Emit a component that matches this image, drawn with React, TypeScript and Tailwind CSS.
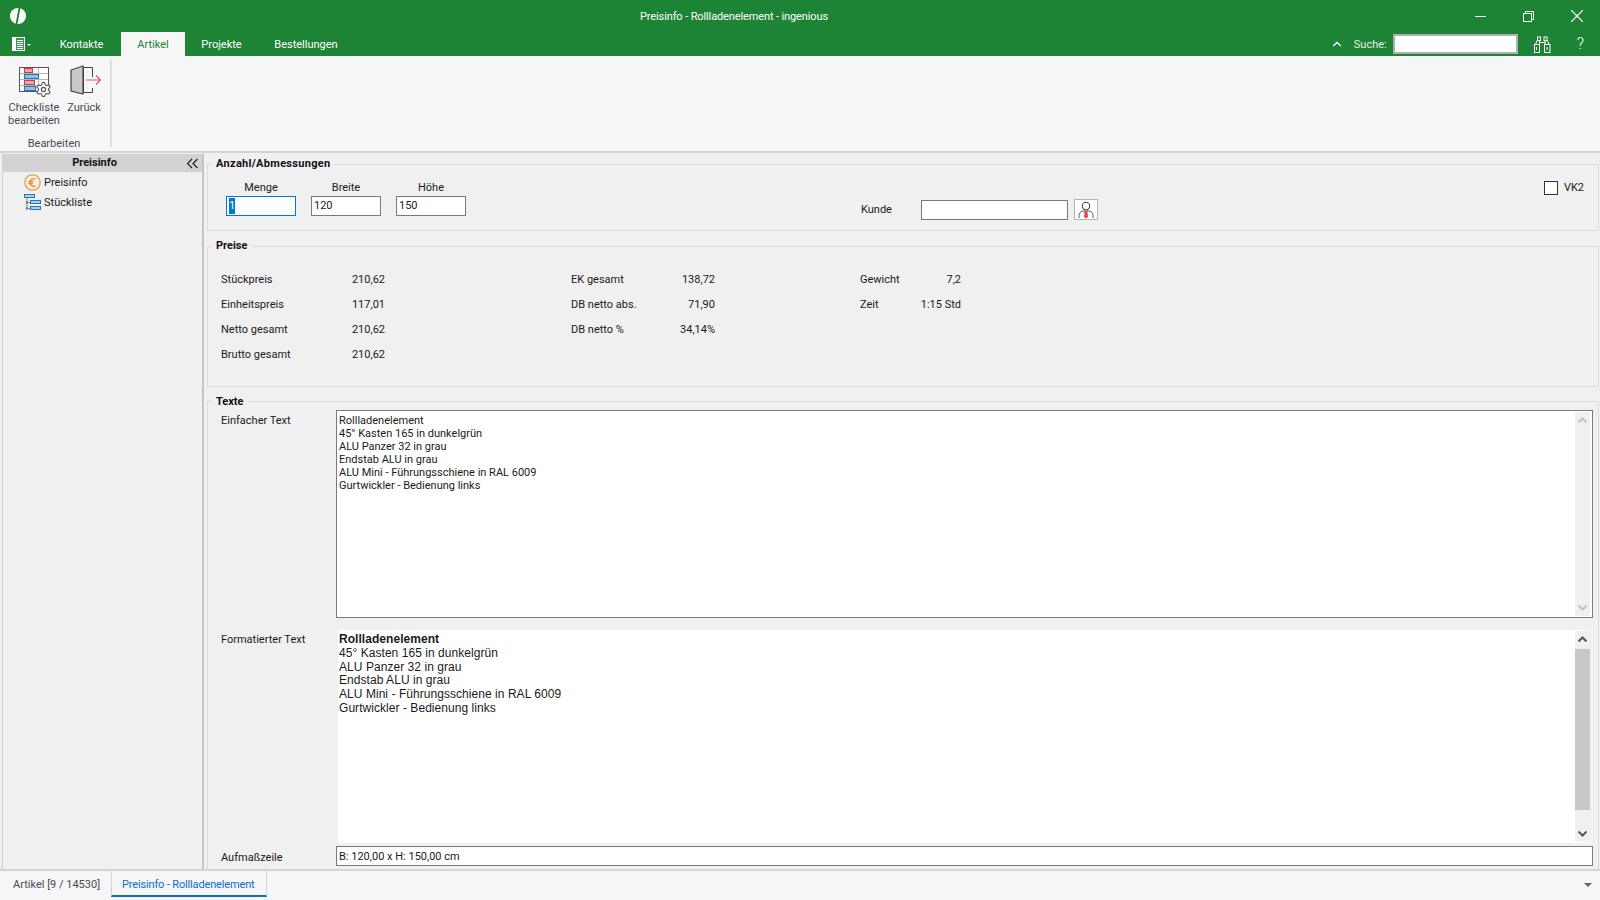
import { ChevronUp, Minus, Settings, X } from "lucide-react";

const TEXT_LINES = [
  "45° Kasten 165 in dunkelgrün",
  "ALU Panzer 32 in grau",
  "Endstab ALU in grau",
  "ALU Mini - Führungsschiene in RAL 6009",
  "Gurtwickler - Bedienung links",
];

function Logo() {
  return (
    <svg width="16" height="16" viewBox="0 0 16 16">
      <circle cx="8" cy="8" r="8" fill="#fff" />
      <path d="M9.6 -0.5 L6.4 16.5" stroke="#1d8335" strokeWidth="1.8" />
    </svg>
  );
}

function RestoreIcon() {
  return (
    <svg width="11" height="11" viewBox="0 0 11 11" fill="none" stroke="#fff" strokeWidth="1">
      <rect x="0.5" y="2.5" width="8" height="8" />
      <path d="M2.5 2.5V0.5H10.5V8.5H8.5" />
    </svg>
  );
}

function AppMenuIcon() {
  return (
    <svg width="13" height="14" viewBox="0 0 13 14" fill="none">
      <rect x="0.5" y="0.5" width="12" height="13" fill="#fff" fillOpacity="0.15" stroke="#fff" />
      <rect x="1" y="1" width="3" height="12" fill="#fff" />
      <path d="M5 3.5H11M5 5.5H11M5 7.5H11M5 9.5H11M5 11.5H11" stroke="#fff" />
    </svg>
  );
}

function BinocularsIcon() {
  return (
    <svg width="17" height="17" viewBox="0 0 17 17" fill="none" stroke="#fff" strokeWidth="1">
      <rect x="0.5" y="8.5" width="5" height="8" />
      <rect x="10.5" y="8.5" width="5.5" height="8" />
      <path d="M1.5 8.5L3 4.5H5.5V8.5M15 8.5L13.5 4.5H11V8.5" />
      <rect x="3.5" y="1" width="3" height="3.5" />
      <rect x="10" y="1" width="3" height="3.5" />
      <path d="M5.5 6.5H11M2.5 11V14M13 11V14" />
    </svg>
  );
}

function ChecklistIcon() {
  return (
    <svg width="33" height="30" viewBox="0 0 33 30" fill="none">
      <rect x="0.5" y="0.5" width="29" height="24" fill="#fff" stroke="#555" />
      <path d="M0.5 6.5H29.5M0.5 12.5H29.5M0.5 18.5H29.5M5.5 0.5V24.5M19.5 0.5V24.5" stroke="#b5b5b5" />
      <path d="M0.5 0.5H29.5V24.5H0.5Z" stroke="#555" />
      <rect x="5.5" y="1.5" width="8" height="4" fill="#f2a5a8" stroke="#d9363e" />
      <rect x="5.5" y="7.5" width="14" height="4" fill="#8fc3e8" stroke="#1e78b8" />
      <rect x="5.5" y="13.5" width="10" height="4" fill="#f2a5a8" stroke="#d9363e" />
      <rect x="5.5" y="19.5" width="11" height="4" fill="#8fc3e8" stroke="#1e78b8" />
      <Settings x={16} y={14} size={17} strokeWidth={1.6} color="#555" fill="#f6f6f6" />
    </svg>
  );
}

function BackIcon() {
  return (
    <svg width="32" height="30" viewBox="0 0 32 30" fill="none">
      <path d="M13.5 2.5V27.5H22.5V23M22.5 12V2.5H13.5" stroke="#444" />
      <path d="M1 5L13 1V29L1 26Z" fill="#c9c9c9" stroke="#444" strokeWidth="1.2" />
      <path d="M16 15H30M26 10.5L30.5 15L26 19.5" stroke="#e8505a" strokeWidth="1.1" />
    </svg>
  );
}

function EuroIcon() {
  return (
    <svg width="17" height="17" viewBox="0 0 17 17" fill="none">
      <circle cx="8.5" cy="8.5" r="7.7" fill="#fdf1e4" stroke="#ee9a4d" strokeWidth="1.3" />
      <path d="M11.5 5.2C9 3.9 6.3 5.3 6.3 8.5C6.3 11.7 9 13.1 11.5 11.8M4.3 7.5H9.5M4.3 9.5H9" stroke="#ee8a2f" strokeWidth="1.3" />
    </svg>
  );
}

function TreeIcon() {
  return (
    <svg width="17" height="17" viewBox="0 0 17 17" fill="none">
      <path d="M3 4V14.5M3 8.5H6M3 14.5H6" stroke="#888" />
      <rect x="0.5" y="0.5" width="10" height="3" fill="#a9d2ee" stroke="#1e78b8" />
      <rect x="6.5" y="6.5" width="10" height="3" fill="#a9d2ee" stroke="#1e78b8" />
      <rect x="6.5" y="12.5" width="10" height="3" fill="#a9d2ee" stroke="#1e78b8" />
      <circle cx="3" cy="8.5" r="1.4" fill="#888" />
      <circle cx="3" cy="14.5" r="1.4" fill="#888" />
    </svg>
  );
}

function PersonIcon() {
  return (
    <svg width="16" height="18" viewBox="0 0 16 18" fill="none">
      <circle cx="8" cy="5" r="3.7" fill="#fff" stroke="#444" strokeWidth="1.1" />
      <path d="M1 17V14.5C1 11.5 3.5 10 5.5 10H10.5C12.5 10 15 11.5 15 14.5V17" stroke="#555" />
      <path d="M6.5 10H9.5L10 16L8 17.5L6 16Z" fill="#d9534f" />
    </svg>
  );
}

function TopTab({ label, width, active }: { label: string; width: string; active?: boolean }) {
  return (
    <div
      className={
        active
          ? `flex h-6 items-center justify-center bg-[#f6f6f6] pt-[2px] text-[#1d8335] ${width}`
          : `flex h-6 items-center justify-center pt-[2px] text-white ${width}`
      }
    >
      {label}
    </div>
  );
}

function SmallInput({ value, focused }: { value: string; focused?: boolean }) {
  return (
    <div
      className={
        focused
          ? "flex h-5 w-[70px] items-center border border-[#0078d7] bg-white pl-[2px]"
          : "flex h-5 w-[70px] items-center border border-[#7a7a7a] bg-white pl-[2px]"
      }
    >
      {focused ? <span className="bg-[#0078d7] text-white">{value}</span> : value}
    </div>
  );
}

function SizeField({ label, value, focused }: { label: string; value: string; focused?: boolean }) {
  return (
    <div className="flex w-[70px] flex-col items-center">
      <div className="h-[17px] leading-[18px]">{label}</div>
      <SmallInput value={value} focused={focused} />
    </div>
  );
}

function ValueRow({ label, value }: { label: string; value: string }) {
  return (
    <div className="flex h-[25px] items-center justify-between">
      <span>{label}</span>
      <span>{value}</span>
    </div>
  );
}

function Legend({ children, className }: { children: string; className?: string }) {
  return <legend className={`ml-[4px] h-4 px-1 font-bold text-[#111] ${className}`}>{children}</legend>;
}

function ScrollArrow({ up, color }: { up?: boolean; color: string }) {
  return (
    <svg width="15" height="17" viewBox="0 0 15 17" fill="none" stroke={color} strokeWidth="2">
      <path d={up ? "M3.5 10.5L7.5 6.5L11.5 10.5" : "M3.5 6.5L7.5 10.5L11.5 6.5"} />
    </svg>
  );
}

export default function App() {
  return (
    <div className="flex h-[900px] w-[1600px] flex-col overflow-hidden bg-[#f0f0f0] text-[11px] text-[#1a1a1a] [font-family:Roboto,sans-serif]">
      {/* title bar */}
      <header className="h-14 shrink-0 bg-[#1d8335] text-white">
        <div className="flex h-8 items-center">
          <div className="ml-[10px] w-[630px]">
            <Logo />
          </div>
          <div className="flex-1 pt-[2px] tracking-[-0.12px]">Preisinfo - Rollladenelement - ingenious</div>
          <div className="flex items-center">
            <div className="flex h-8 w-12 items-center justify-center">
              <Minus size={17} strokeWidth={1.4} />
            </div>
            <div className="flex h-8 w-12 items-center justify-center">
              <RestoreIcon />
            </div>
            <div className="flex h-8 w-12 items-center justify-center pl-[2px]">
              <X size={22} strokeWidth={1.2} />
            </div>
          </div>
        </div>
        <div className="flex h-6 items-center">
          <div className="ml-3 flex w-[31px] items-center">
            <AppMenuIcon />
            <span className="ml-[2px] mt-[2px] h-0 w-0 border-x-[2px] border-t-[2px] border-x-transparent border-t-white" />
          </div>
          <TopTab label="Kontakte" width="w-[77px]" />
          <div className="w-px" />
          <TopTab label="Artikel" width="w-[64px]" active />
          <TopTab label="Projekte" width="w-[73px]" />
          <TopTab label="Bestellungen" width="w-[96px]" />
          <div className="flex-1" />
          <ChevronUp size={14} strokeWidth={2} />
          <span className="ml-[10px] pt-[2px] text-[#e4f2e6]">Suche:</span>
          <div className="ml-[6px] h-5 w-[125px] border-2 border-[#b0b0b0] bg-white" />
          <div className="ml-4 w-[43px]">
            <BinocularsIcon />
          </div>
          <span className="mr-4 text-[16px] font-light leading-none">?</span>
        </div>
      </header>

      {/* ribbon */}
      <div className="flex h-[95px] shrink-0 bg-[#f6f6f6] text-[#4a4a58]">
        <div className="mt-1 flex h-[87px] w-[112px] flex-col border-r-2 border-[#dedede]">
          <div className="flex h-[71px]">
            <div className="ml-[6px] flex w-[56px] flex-col items-center pt-[7px]">
              <div className="ml-[3px] h-[34px]">
                <ChecklistIcon />
              </div>
              <div className="text-center leading-[13px]">
                Checkliste
                <br />
                bearbeiten
              </div>
            </div>
            <div className="flex w-[44px] flex-col items-center pt-[5px]">
              <div className="ml-[4px] h-[36px]">
                <BackIcon />
              </div>
              <div className="leading-[13px]">Zurück</div>
            </div>
          </div>
          <div className="mt-[7px] h-[9px] pr-[2px] text-center leading-3">Bearbeiten</div>
        </div>
      </div>

      {/* content */}
      <div className="flex h-[720px] shrink-0 border-y-2 border-[#d4d4d4] pl-[2px]">
        <aside className="mt-px w-[202px] shrink-0 border-l border-r-2 border-[#c4c4c4] border-l-[#d0d0d0]">
          <div className="flex h-[18px] items-center bg-[#d2d2d2]">
            <div className="flex-1 pt-px text-center font-bold text-[#111]">Preisinfo</div>
            <svg className="mr-[3px]" width="13" height="11" viewBox="0 0 13 11" fill="none" stroke="#222" strokeWidth="1.2">
              <path d="M6 1L1.5 5.5L6 10M11.5 1L7 5.5L11.5 10" />
            </svg>
          </div>
          <div className="flex h-5 items-center pl-[21px]">
            <EuroIcon />
            <span className="ml-[3px] pt-[2px]">Preisinfo</span>
          </div>
          <div className="flex h-5 items-center pl-[21px]">
            <TreeIcon />
            <span className="ml-[3px] pt-[2px]">Stückliste</span>
          </div>
        </aside>

        <main className="ml-[3px] flex min-w-0 flex-1 flex-col pr-[1px] pt-[3px]">
          <fieldset className="h-[75px] shrink-0 border border-[#dcdcdc]">
            <Legend className="leading-4 tracking-[0.3px]">Anzahl/Abmessungen</Legend>
            <div className="flex pl-[18px] pt-[7px]">
              <div className="flex gap-[15px]">
                <SizeField label="Menge" value="1" focused />
                <SizeField label="Breite" value="120" />
                <SizeField label="Höhe" value="150" />
              </div>
              <div className="ml-[395px] mt-[20px] flex items-center">
                <span className="w-[60px] pt-[2px]">Kunde</span>
                <div className="h-5 w-[147px] border border-[#7a7a7a] bg-white" />
                <div className="ml-[6px] flex h-[21px] w-6 items-center justify-center border border-[#b4b4b4] bg-white">
                  <PersonIcon />
                </div>
              </div>
              <div className="flex-1" />
              <div className="mr-[14px] mt-[2px] flex h-[14px] items-center">
                <span className="h-[14px] w-[14px] border border-[#333] bg-white" />
                <span className="ml-[6px]">VK2</span>
              </div>
            </div>
          </fieldset>

          <fieldset className="mt-[7px] h-[149px] shrink-0 border border-[#dcdcdc]">
            <Legend className="leading-4">Preise</Legend>
            <div className="flex pl-[13px] pt-[14px]">
              <div className="w-[164px]">
                <ValueRow label="Stückpreis" value="210,62" />
                <ValueRow label="Einheitspreis" value="117,01" />
                <ValueRow label="Netto gesamt" value="210,62" />
                <ValueRow label="Brutto gesamt" value="210,62" />
              </div>
              <div className="ml-[186px] w-[144px]">
                <ValueRow label="EK gesamt" value="138,72" />
                <ValueRow label="DB netto abs." value="71,90" />
                <ValueRow label="DB netto %" value="34,14%" />
              </div>
              <div className="ml-[145px] w-[101px]">
                <ValueRow label="Gewicht" value="7,2" />
                <ValueRow label="Zeit" value="1:15 Std" />
              </div>
            </div>
          </fieldset>

          <fieldset className="mt-[6px] min-h-0 flex-1 border border-[#dcdcdc] border-b-0">
            <Legend className="leading-[17px]">Texte</Legend>
            <div className="pl-[13px] pr-[5px]">
              <div className="mt-px flex h-[208px]">
                <div className="w-[115px] pt-[3px]">Einfacher Text</div>
                <div className="flex flex-1 border border-[#7a7a7a] bg-white">
                  <div className="flex-1 pl-[2px] pt-[3px] leading-[13px]">
                    <div>Rollladenelement</div>
                    {TEXT_LINES.map(line => (
                      <div key={line}>{line}</div>
                    ))}
                  </div>
                  <div className="my-px mr-[2px] flex w-[15px] flex-col items-center justify-between bg-[#f0f0f0]">
                    <ScrollArrow up color="#c2c2c2" />
                    <ScrollArrow color="#c2c2c2" />
                  </div>
                </div>
              </div>
              <div className="mt-[12px] flex h-[213px]">
                <div className="w-[117px] pt-[2px]">Formatierter Text</div>
                <div className="mr-[3px] flex flex-1 bg-white pl-[1px] pt-[3px] text-[12px] tracking-[0.05px] [font-family:'Liberation_Sans',sans-serif]">
                  <div className="flex-1 leading-[13.8px]">
                    <div className="font-bold">Rollladenelement</div>
                    {TEXT_LINES.map(line => (
                      <div key={line}>{line}</div>
                    ))}
                  </div>
                  <div className="-mt-[2px] mb-px flex w-[15px] flex-col bg-[#f0f0f0]">
                    <ScrollArrow up color="#555" />
                    <div className="mt-px h-[161px] bg-[#c8c8c8]" />
                    <div className="flex-1" />
                    <ScrollArrow color="#555" />
                  </div>
                </div>
              </div>
              <div className="mt-[3px] flex h-5 items-center">
                <div className="w-[115px] pt-1">Aufmaßzeile</div>
                <div className="flex h-5 flex-1 items-center border border-[#7a7a7a] bg-white pl-[2px] pt-[2px]">
                  B: 120,00 x H: 150,00 cm
                </div>
              </div>
            </div>
          </fieldset>
        </main>
      </div>

      {/* document tabs */}
      <footer className="flex flex-1 items-start whitespace-nowrap bg-[#f6f6f6] text-[#4a4a58]">
        <div className="flex h-[24px] w-[111px] items-center pl-[13px] pt-[4px]">Artikel [9 / 14530]</div>
        <div className="flex h-[26px] w-[156px] items-center border-x border-b-2 border-[#d4d4d4] border-b-[#0b6fc2] pl-[10px] pt-[4px] tracking-[-0.15px] text-[#0b6fc2]">
          Preisinfo - Rollladenelement
        </div>
        <div className="flex-1" />
        <span className="mr-[8px] mt-[12px] h-0 w-0 border-x-[4px] border-t-[4px] border-x-transparent border-t-[#666]" />
      </footer>
    </div>
  );
}
